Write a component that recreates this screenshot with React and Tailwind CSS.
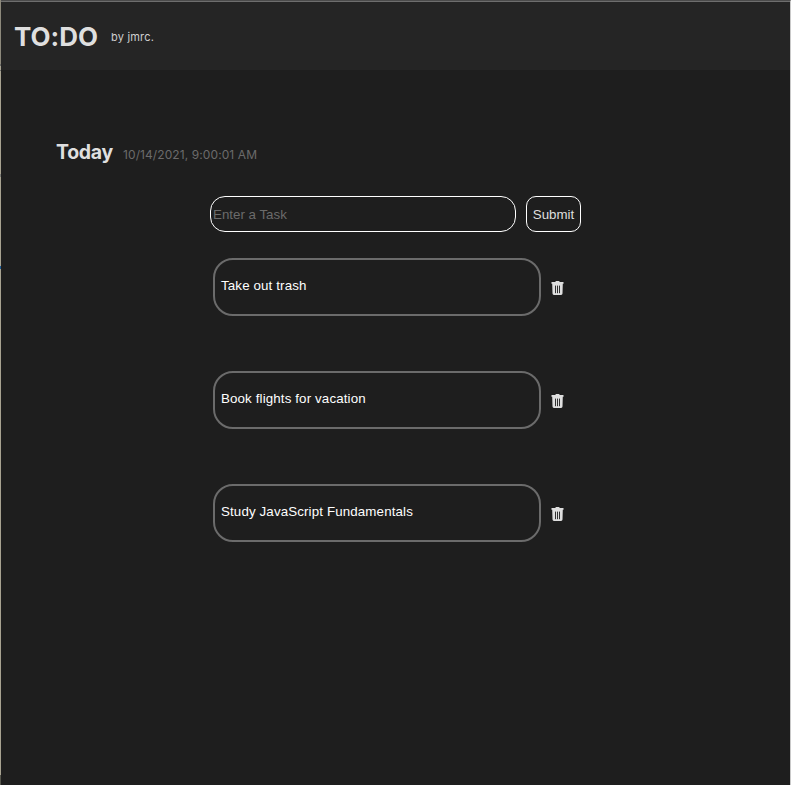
const tasks = ["Take out trash", "Book flights for vacation", "Study JavaScript Fundamentals"];

function TrashIcon() {
  return (
    <svg width="13" height="14" viewBox="0 0 13 14" aria-hidden="true">
      <path
        fill="#dfdfdf"
        d="M4.2 1 4.7.3Q4.9 0 5.2 0h2.6q.3 0 .5.3L8.8 1h3.3q.5 0 .5.5v.8q0 .5-.5.5H11.8l-.3 9.8Q11.4 14 10.1 14H2.9Q1.6 14 1.5 12.6L1.2 2.8H.9Q.4 2.8.4 2.3v-.8Q.4 1 .9 1Z"
      />
      <path stroke="#1e1e1e" strokeWidth="0.9" strokeLinecap="round" d="M4.5 5v6.8M6.5 5v6.8M8.5 5v6.8" />
    </svg>
  );
}

function Task({ text }) {
  return (
    <li className="flex h-[58px] items-center">
      <div className="h-[58px] w-[328px] rounded-[20px] border-2 border-[#6b6b6b] pt-[18px] pl-[6px] font-['Liberation_Sans',Arial,sans-serif] text-[13.333px] leading-[16px] tracking-[0.13px] text-white">
        {text}
      </div>
      <button aria-label="Delete" className="ml-[10px] pt-[2px]">
        <TrashIcon />
      </button>
    </li>
  );
}

// Thin sliver of the desktop visible beside the window.
function DesktopEdge() {
  return (
    <div className="flex w-px shrink-0 flex-col bg-[#a8a391]">
      <div className="h-[64px] bg-[#8d897b]" />
      <div className="h-[2px] bg-[#6d6d69]" />
      <div className="mt-[4px] h-px bg-[#6d6d69]" />
      <div className="mt-[103px] h-[3px] bg-[#7e7d78]" />
      <div className="mt-[89px] h-[3px] bg-[#1e5b94]" />
      <div className="mt-auto h-[10px] bg-[#56564d]" />
    </div>
  );
}

export default function App() {
  return (
    <div className="flex h-[785px] w-[791px] overflow-hidden bg-[#1e1e1e] font-[Inter,sans-serif] [font-feature-settings:'calt'_0]">
      <DesktopEdge />
      <div className="flex flex-1 flex-col border-t border-r border-t-[#4b4b4b] border-r-[#c9c9c9]">
        <header className="flex h-[69px] shrink-0 items-start border-t border-[#6e6e6e] bg-[#252525] pt-[19px] pl-[13px]">
          <h1 className="w-[97px] text-[26px] leading-[32px] font-bold text-[#dfdfdf]">TO:DO</h1>
          <span className="mt-[8px] text-[11px] leading-[16px] tracking-[0.2px] text-[#cfcfcf]">by jmrc.</span>
        </header>
        <main>
          <div className="flex items-baseline pt-[70px] pl-[55px]">
            <h2 className="w-[67px] text-[19.5px] leading-[24px] font-bold tracking-[-0.3px] text-[#dfdfdf]">Today</h2>
            <span className="text-[12px] tracking-[0.09px] text-[#6b6b6b]">10/14/2021, 9:00:01 AM</span>
          </div>
          <form
            className="mt-[32px] ml-[209px] flex gap-[10px] font-['Liberation_Sans',Arial,sans-serif] text-[13.333px]"
            onSubmit={(e) => e.preventDefault()}
          >
            <input
              placeholder="Enter a Task"
              className="h-[36px] w-[306px] rounded-[15px] border border-white bg-transparent px-[2px] text-white placeholder:text-[#6b6b6b]"
            />
            <button className="h-[36px] w-[55px] rounded-[10px] border border-white pt-[2px] text-[#dfdfdf]">Submit</button>
          </form>
          <ul className="mt-[26px] ml-[212px] flex flex-col gap-[55px]">
            {tasks.map((task) => (
              <Task key={task} text={task} />
            ))}
          </ul>
        </main>
      </div>
    </div>
  );
}
